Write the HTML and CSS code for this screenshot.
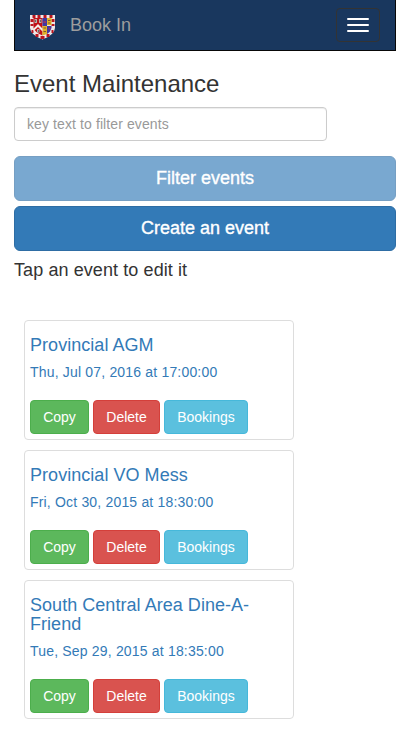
FILE: index.html
```html
<!DOCTYPE html>
<html lang="en">
<head>
<meta charset="utf-8">
<title>Book In</title>
<link rel="stylesheet" href="styles.css">
</head>
<body>
<nav class="navbar">
  <a class="brand">
    <svg class="crest" viewBox="0 0 26 26">
      <path d="M.5 1H25.5V14Q25 21 13 25.5Q1 21 .5 14Z" fill="#eee8e8"/>
      <path d="M3 1H6V4H3ZM8 1H11V4H8ZM14 1H17V4H14ZM20 1H23V4H20ZM1 5H4V8H1ZM22 5H25V8H22ZM1 10H4V12H1ZM22 10H25V12H22ZM2 16H4V19H2ZM22 16H24V19H22ZM6 20H9V23H6ZM17 20H20V23H17ZM11 22H15V25H11Z" fill="#b9151e"/>
      <path d="M4 4H13V21.500Q6 19 4 14Z" fill="#c01118"/>
      <path d="M13 4H17.500V12H13ZM17.500 12H22V14Q21 18 17.500 20Z" fill="#4038a0"/>
      <path d="M17.500 4H22V11H17.500ZM13 12H17.500V20L13 21.500Z" fill="#dfb32a"/>
      <path d="M4 14.500L8.500 10L13 14.500V17.500L8.500 13L4 17Z" fill="#f3eee9"/>
      <path d="M5 5H7.500V9H5ZM9.500 5H12V9H9.500ZM7.500 15H10V18.500H7.500Z" fill="#b9b0aa"/>
      <path d="M6 6V8M11 6V8M9 16V18" stroke="#555" stroke-width=".8" fill="none"/>
      <path d="M18.500 6.500H21M18.500 9H21M14 14H16.500M14 17.500H16.500" stroke="#7e5535" fill="none"/>
      <path d="M14 8H16.500M19 14.500H21" stroke="#a83458" stroke-width="1.500"/>
    </svg>
    <span class="brand-name">Book In</span>
  </a>
  <button class="toggle" aria-label="Menu"><span></span><span></span><span></span></button>
</nav>
<main>
  <h1>Event Maintenance</h1>
  <input class="filter" type="text" placeholder="key text to filter events">
  <button class="block muted">Filter events</button>
  <button class="block">Create an event</button>
  <h2>Tap an event to edit it</h2>
  <section class="events">
    <article class="card">
      <h3>Provincial AGM</h3>
      <p>Thu, Jul 07, 2016 at 17:00:00</p>
      <div class="actions"><button class="btn copy">Copy</button><button class="btn delete">Delete</button><button class="btn bookings">Bookings</button></div>
    </article>
    <article class="card">
      <h3>Provincial VO Mess</h3>
      <p>Fri, Oct 30, 2015 at 18:30:00</p>
      <div class="actions"><button class="btn copy">Copy</button><button class="btn delete">Delete</button><button class="btn bookings">Bookings</button></div>
    </article>
    <article class="card">
      <h3>South Central Area Dine-A-Friend</h3>
      <p>Tue, Sep 29, 2015 at 18:35:00</p>
      <div class="actions"><button class="btn copy">Copy</button><button class="btn delete">Delete</button><button class="btn bookings">Bookings</button></div>
    </article>
  </section>
</main>
</body>
</html>
```
FILE: styles.css
```css
* { box-sizing: border-box; }
body {
  margin: 0;
  padding: 0 13px 0 14px;
  background: #fff;
  color: #333;
  font: 14px/20px "Liberation Sans", Arial, sans-serif;
}
button, input { font: inherit; }
h1, h2, h3, p { margin: 0; font-weight: 400; }
.navbar {
  display: flex;
  justify-content: space-between;
  height: 51px;
  padding: 8px 15px 0 14px;
  background: #19375e;
  border: solid #080808;
  border-width: 0 1px 1px;
}
.brand { display: flex; gap: 14px; height: 35px; }
.crest { width: 27px; height: 26px; margin-top: 6px; }
.brand-name { color: #9d9d9d; font-size: 18px; line-height: 34px; }
.toggle {
  display: flex;
  flex-direction: column;
  gap: 4px;
  width: 44px;
  height: 34px;
  padding: 9px 10px;
  background: none;
  border: 1px solid #333;
  border-radius: 4px;
}
.toggle span { width: 22px; height: 2px; border-radius: 1px; background: #fff; }
h1 { margin: 20px 0 10px; font-size: 24px; line-height: 26px; }
.filter {
  display: block;
  width: 313px;
  height: 34px;
  padding: 6px 12px;
  border: 1px solid #ccc;
  border-radius: 4px;
  box-shadow: inset 0 1px 1px rgba(0, 0, 0, .075);
  margin-bottom: 15px;
}
.filter::placeholder { color: #999; opacity: 1; letter-spacing: .1px; }
.block {
  display: block;
  width: 100%;
  height: 45px;
  margin-bottom: 5px;
  padding: 0 0 2px;
  border: 1px solid #2e6da4;
  border-radius: 6px;
  background: #337ab7;
  color: #fff;
  font-size: 18px;
  -webkit-text-stroke: .35px #fff;
}
.muted { opacity: .65; }
h2 { margin-top: 9px; font-size: 18px; line-height: 20px; letter-spacing: .09px; }
.events { display: grid; gap: 10px; width: 270px; margin: 40px 0 0 10px; }
.card {
  padding: 15px 5px 5px;
  border: 1px solid #ddd;
  border-radius: 4px;
  color: #337ab7;
}
.card h3 { font-size: 18px; line-height: 19px; margin-bottom: 7px; letter-spacing: .04px; }
.card p { letter-spacing: .18px; }
.actions { display: flex; gap: 4px; margin-top: 18px; }
.btn {
  width: 59px;
  height: 34px;
  padding: 0;
  border: 1px solid #4cae4c;
  border-radius: 4px;
  background: #5cb85c;
  color: #fff;
}
.delete { width: 67px; background: #d9534f; border-color: #d43f3a; }
.bookings { width: 84px; background: #5bc0de; border-color: #46b8da; }
```
